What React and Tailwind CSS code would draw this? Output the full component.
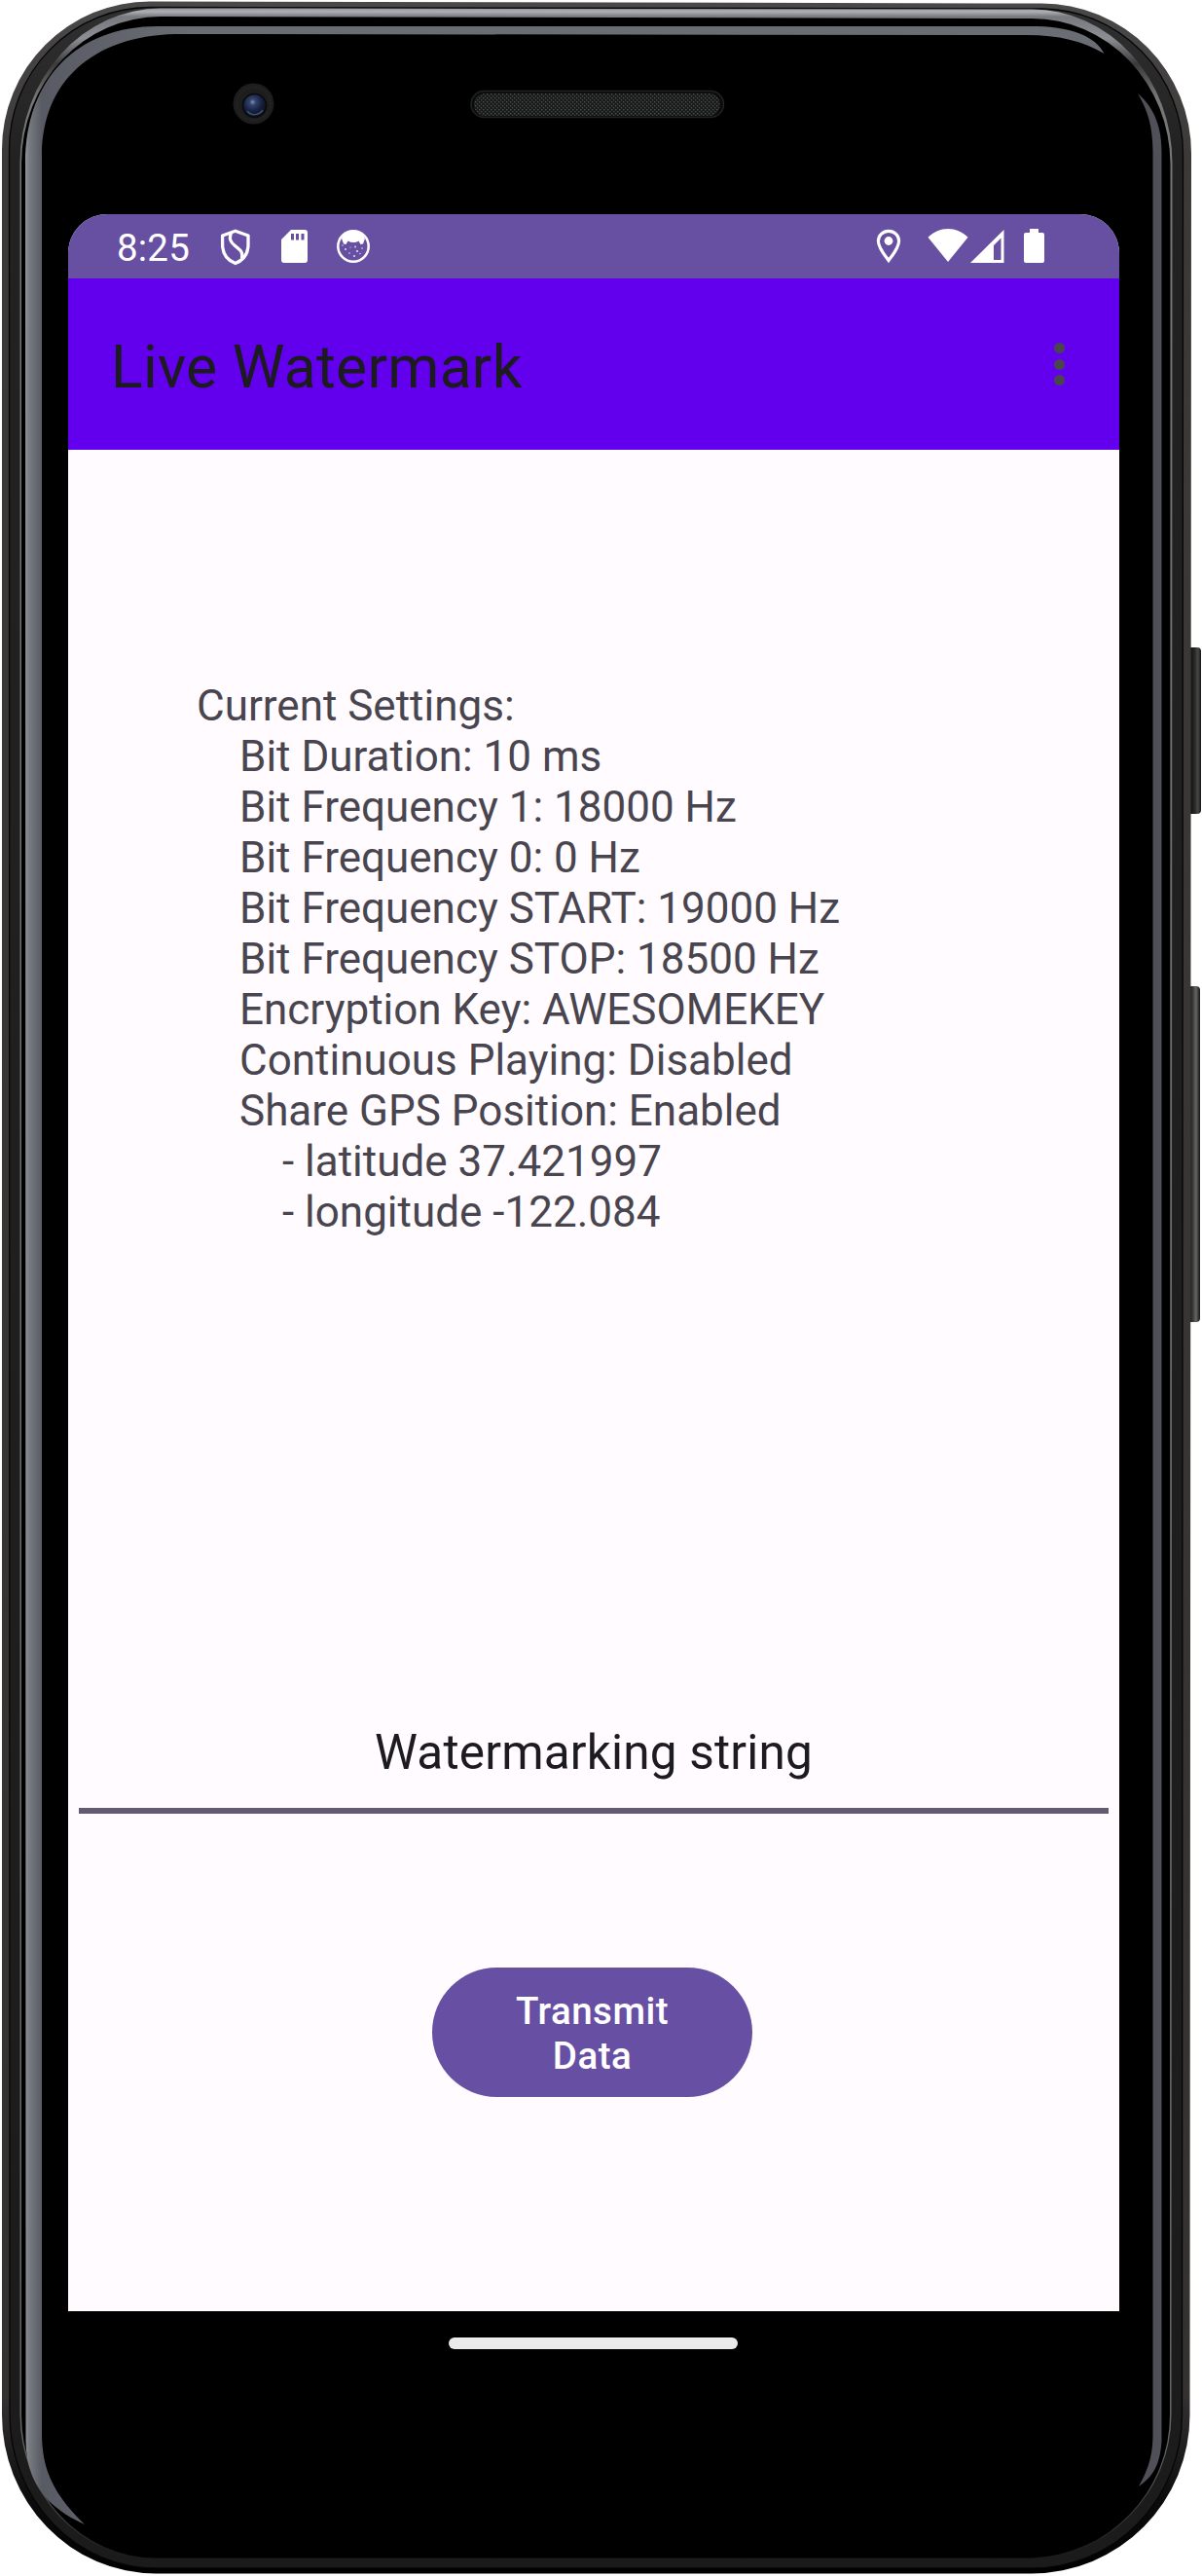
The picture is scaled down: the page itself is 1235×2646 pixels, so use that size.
import React from "react";

const settings = [
  ["Current Settings:", 0],
  ["Bit Duration: 10 ms", 1],
  ["Bit Frequency 1: 18000 Hz", 1],
  ["Bit Frequency 0: 0 Hz", 1],
  ["Bit Frequency START: 19000 Hz", 1],
  ["Bit Frequency STOP: 18500 Hz", 1],
  ["Encryption Key: AWESOMEKEY", 1],
  ["Continuous Playing: Disabled", 1],
  ["Share GPS Position: Enabled", 1],
  ["- latitude 37.421997", 2],
  ["- longitude -122.084", 2],
];
const indents = ["", "pl-[44px]", "pl-[88px]"];

function PhoneFrame() {
  return (
    <svg className="absolute inset-0" width="1235" height="2646" viewBox="0 0 1235 2646" fill="none" aria-hidden="true">
      <defs>
        <linearGradient id="shell" x1="0" y1="0" x2="0" y2="2646" gradientUnits="userSpaceOnUse">
          <stop offset="0" stopColor="#4a4848" />
          <stop offset=".06" stopColor="#3c3939" />
          <stop offset=".93" stopColor="#343131" />
          <stop offset=".97" stopColor="#0c0c0c" />
          <stop offset="1" stopColor="#000" />
        </linearGradient>
        <linearGradient id="rim" x1="0" y1="0" x2="0" y2="2646" gradientUnits="userSpaceOnUse">
          <stop offset="0" stopColor="#303030" />
          <stop offset=".06" stopColor="#222222" />
          <stop offset="1" stopColor="#1b1b1b" />
        </linearGradient>
        <linearGradient id="shine" x1="0" y1="8" x2="0" y2="2628" gradientUnits="userSpaceOnUse">
          <stop offset="0" stopColor="#8f9196" />
          <stop offset=".0015" stopColor="#adafb4" />
          <stop offset=".0035" stopColor="#77797e" />
          <stop offset=".012" stopColor="#8c8e93" />
          <stop offset=".022" stopColor="#3a3a3c" />
          <stop offset=".035" stopColor="#777" />
          <stop offset=".95" stopColor="#666" />
          <stop offset=".98" stopColor="#444" />
          <stop offset="1" stopColor="#1b1b1b" />
        </linearGradient>
        <linearGradient id="left" x1="26" y1="0" x2="196" y2="0" gradientUnits="userSpaceOnUse">
          <stop offset="0" stopColor="#8f9297" />
          <stop offset=".025" stopColor="#777a80" />
          <stop offset=".1" stopColor="#585b63" />
          <stop offset="1" stopColor="#6a6d74" />
        </linearGradient>
        <linearGradient id="key" x1="1221" y1="0" x2="1234" y2="0" gradientUnits="userSpaceOnUse">
          <stop offset="0" stopColor="#080808" />
          <stop offset=".5" stopColor="#282828" />
          <stop offset=".75" stopColor="#484848" />
          <stop offset="1" stopColor="#151515" />
        </linearGradient>
        <linearGradient id="key2" x1="1221" y1="0" x2="1233" y2="0" gradientUnits="userSpaceOnUse">
          <stop offset="0" stopColor="#151515" />
          <stop offset=".35" stopColor="#353535" />
          <stop offset=".65" stopColor="#666" />
          <stop offset="1" stopColor="#151515" />
        </linearGradient>
        <radialGradient id="lens" cx=".42" cy=".35" r=".65">
          <stop offset="0" stopColor="#8090b8" />
          <stop offset=".2" stopColor="#35446f" />
          <stop offset=".6" stopColor="#17213f" />
          <stop offset="1" stopColor="#0b101e" />
        </radialGradient>
        <pattern id="mesh" width="4" height="4" patternUnits="userSpaceOnUse">
          <rect width="4" height="4" fill="#191a1a" />
          <rect width="1.4" height="1.4" fill="#4c4f4f" />
          <rect x="2" y="2" width="1.4" height="1.4" fill="#434646" />
        </pattern>
      </defs>
      <rect x="1218" y="665" width="16" height="171" rx="4" fill="url(#key)" />
      <rect x="1218" y="1013" width="15" height="345" rx="4" fill="url(#key2)" />
      <path d="M2 154A152 152 0 0 1 154 1.5L1070 3.5A154 154 0 0 1 1224 158L1222.5 2480A163 163 0 0 1 1060 2643.500H160A158 163 0 0 1 2 2480Z" fill="url(#shell)" />
      <path d="M9.500 154A145 146 0 0 1 154 7.500L1070 9A146 149 0 0 1 1215.500 158L1214.500 2480A154 158 0 0 1 1060 2638H160A150 158 0 0 1 10 2480Z" fill="url(#rim)" stroke="#060606" strokeWidth="1.300" />
      <path d="M20.500 168A145 159 0 0 1 165 8.500L1060 9.500A144 158 0 0 1 1204.500 168L1203.500 2480A148 148 0 0 1 1060 2628H160A138 148 0 0 1 20.500 2480Z" fill="url(#shine)" />
      <path d="M22 168A143 151 0 0 1 165 17L1060 19A142.500 150 0 0 1 1202.500 168L1202 2480A147 147 0 0 1 1060 2627.500H160A138 147 0 0 1 22 2480Z" fill="#000" />
      <path d="M26 168C26 80 80 27 162 27H1066C1102 28 1126 38 1134.500 55C1112 42 1088 36 1055 36L180 35C95 37 43 84 43 160V2503C44 2539 56 2563 87 2593C47 2575 27 2549 26.500 2507Z" fill="url(#left)" />
      <path d="M1169 96C1187 111 1193.500 133 1193.500 155V2507C1192 2533 1184 2544 1170 2554C1180 2536 1184 2523 1184.500 2503V155C1184 130 1180 115 1169 96Z" fill="#505158" />
      <circle cx="260.500" cy="106.500" r="21" fill="#1d1d1e" />
      <circle cx="260.500" cy="106.500" r="17" stroke="#272728" strokeWidth="3" strokeDasharray="1 1.500" />
      <circle cx="261.500" cy="108.500" r="12" fill="url(#lens)" stroke="#0b0b0d" strokeWidth="1.500" />
      <path d="M254 114C258 119 266 119 270 113" stroke="#3b5268" strokeWidth="1.500" />
      <rect x="484" y="93.500" width="259.500" height="27" rx="13.500" fill="#0b0b0c" stroke="#222226" strokeWidth="1.500" />
      <rect x="487" y="96" width="253" height="23" rx="11.500" fill="url(#mesh)" />
    </svg>
  );
}

function ShieldIcon() {
  return (
    <svg width="32" height="38" viewBox="0 0 32 38" fill="none" stroke="#fff" strokeWidth="3.300" strokeLinejoin="round">
      <path d="M15.800 2.200L2.600 7V16C2.600 26 8 32.500 15.800 35.500C23.500 32.500 29 26 29 16V7Z" />
      <path d="M11.300 4.500C9.500 10 10 13 15.500 17.500C22 22.500 23.500 24 22.500 30.500" />
    </svg>
  );
}

function SdIcon() {
  return (
    <svg width="27" height="34" viewBox="0 0 27 34">
      <path fillRule="evenodd" fill="#fff" d="M10 0H24Q27 0 27 3V31Q27 34 24 34H3Q0 34 0 31V10ZM10 4V10.500H13V4ZM15 4V10.500H18V4ZM20.500 4V10.500H23.500V4Z" />
    </svg>
  );
}

function FaceIcon() {
  return (
    <svg width="36" height="36" viewBox="0 0 36 36">
      <circle cx="18" cy="18" r="15.700" fill="none" stroke="#fff" strokeWidth="2.500" />
      <path fill="#fff" d="M6 10C9 4 13 2 18 2S27 4 30 10L28 15.500L25.500 16L23.500 12.500C20 14.500 16 14.500 12.500 12.500L10.500 16L8 15.500Z" />
      <g fill="#e6def2">
        <circle cx="10" cy="21" r="1" /><circle cx="20" cy="18.500" r=".9" /><circle cx="27" cy="20" r=".8" /><circle cx="22" cy="23" r="1.100" />
        <circle cx="14" cy="25" r=".8" /><circle cx="19" cy="28" r="1" /><circle cx="25" cy="25.500" r=".7" /><circle cx="7" cy="17" r=".7" /><circle cx="15" cy="19" r=".6" />
      </g>
    </svg>
  );
}

function PinIcon() {
  return (
    <svg width="26" height="36" viewBox="0 0 26 36">
      <path d="M13 2.300C7 2.300 2.400 6.800 2.400 12.600C2.400 19.500 8.500 26.500 13 32.500C17.500 26.500 23.600 19.500 23.600 12.600C23.600 6.800 19 2.300 13 2.300Z" fill="none" stroke="#fff" strokeWidth="3.200" />
      <circle cx="13" cy="12.500" r="4.400" fill="#fff" />
    </svg>
  );
}

function WifiIcon() {
  return (
    <svg width="42" height="34" viewBox="0 0 42 34">
      <path d="M0.500 8.800C12 -2.900 30 -2.900 41.500 8.800L21 34Z" fill="#fff" />
    </svg>
  );
}

function SignalIcon() {
  return (
    <svg width="35" height="34" viewBox="0 0 35 34">
      <path d="M34.500 0V34H0ZM31.500 8.500L24 16V31H31.500Z" fill="#fff" fillRule="evenodd" />
    </svg>
  );
}

function BatteryIcon() {
  return (
    <svg width="21" height="35" viewBox="0 0 21 35">
      <path d="M6 0H15V4H19Q21 4 21 6V33Q21 35 19 35H2Q0 35 0 33V6Q0 4 2 4H6Z" fill="#fff" />
    </svg>
  );
}

function StatusBar() {
  return (
    <div className="flex h-[66px] shrink-0 items-start bg-[#6750a1] pl-[50px] pr-[77px] pt-[15px] text-white">
      <span className="mt-[-3px] w-[106px] text-[38.5px] leading-[46px] tracking-[0.2px]">8:25</span>
      <div className="flex"><ShieldIcon /></div>
      <div className="ml-[31px] mt-px flex"><SdIcon /></div>
      <div className="ml-[29px] flex"><FaceIcon /></div>
      <div className="ml-auto flex"><PinIcon /></div>
      <div className="ml-[27px] flex"><WifiIcon /></div>
      <div className="ml-[2px] mt-px flex"><SignalIcon /></div>
      <div className="ml-[20px] flex"><BatteryIcon /></div>
    </div>
  );
}

export default function App() {
  return (
    <div className="relative h-[2646px] w-[1235px] overflow-hidden bg-white [font-family:Roboto,sans-serif]">
      <PhoneFrame />
      <div className="relative pl-[70px] pt-[220px]">
        <main className="flex h-[2154px] w-[1080px] flex-col overflow-hidden rounded-t-[40px] bg-[#fffbff]">
          <StatusBar />
          <header className="flex h-[176px] shrink-0 items-center justify-between bg-[#6200ee] pl-[44px] pr-[56px]">
            <h1 className="pt-[7px] text-[60.5px] leading-[72px] tracking-[0.3px] text-[#1c1b1f]">Live Watermark</h1>
            <button aria-label="More options" className="flex flex-col gap-[5.5px]">
              <span className="size-[11px] rounded-full bg-[#49454f]" />
              <span className="size-[11px] rounded-full bg-[#49454f]" />
              <span className="size-[11px] rounded-full bg-[#49454f]" />
            </button>
          </header>
          <section className="mt-[237px] h-[572px] shrink-0 whitespace-nowrap pl-[132px] text-[44px] leading-[52px] text-[#49454f]">
            {settings.map(([text, level]) => (
              <p key={text} className={indents[level]}>{text}</p>
            ))}
          </section>
          <div className="mx-[11px] mt-[500px] h-[92px] shrink-0 border-b-[6px] border-[#625b71] text-center text-[49.5px] leading-[58px] tracking-[0.18px] text-[#1c1b1f]">
            Watermarking string
          </div>
          <button className="ml-[374px] mt-[158px] h-[133px] w-[329px] shrink-0 rounded-full bg-[#6750a4] pt-[3px] text-[38.5px] font-medium leading-[46.5px] tracking-[0.5px] text-white">
            Transmit
            <br />
            Data
          </button>
        </main>
        <div className="ml-[391px] mt-[27px] h-[12px] w-[297px] rounded-full bg-[#ebebeb]" />
      </div>
    </div>
  );
}
